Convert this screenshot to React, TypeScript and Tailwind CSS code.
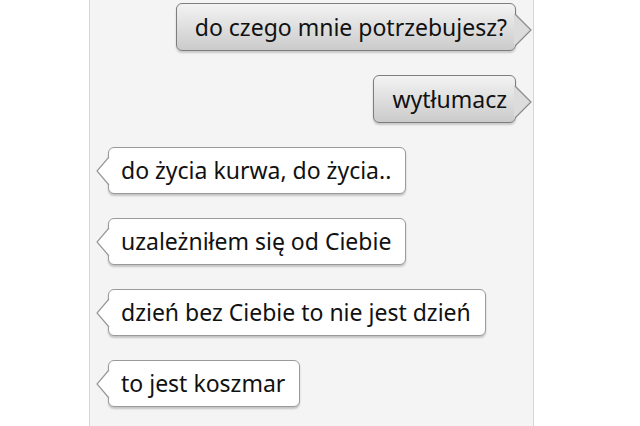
const messages = [
  { text: "do czego mnie potrzebujesz?", mine: true },
  { text: "wytłumacz", mine: true },
  { text: "do życia kurwa, do życia..", mine: false },
  { text: "uzależniłem się od Ciebie", mine: false },
  { text: "dzień bez Ciebie to nie jest dzień", mine: false },
  { text: "to jest koszmar", mine: false },
];

function Bubble({ text, mine }: { text: string; mine: boolean }) {
  if (mine) {
    return (
      <div className="relative self-end mr-[17px]">
        <div className="h-[48px] flex items-center pl-[18px] pr-[8px] rounded-[6px] border border-[#7d7d7d] bg-gradient-to-b from-[#f3f3f3] to-[#cbcbcb] shadow-[0_2px_2px_rgba(0,0,0,0.18)] text-[#111] text-[23px]">
          {text}
        </div>
        <svg
          className="absolute right-[-17px] top-[10px]"
          width="19"
          height="34"
          viewBox="0 0 19 34"
        >
          <polygon points="0,0 17,17 0,34" fill="#dcdcdc" />
          <polyline
            points="1,1 17,17 1,33"
            fill="none"
            stroke="#8a8a8a"
            strokeWidth="1.2"
          />
        </svg>
      </div>
    );
  }
  return (
    <div className="relative self-start ml-[18px]">
      <div className="h-[47px] flex items-center pl-[12px] pr-[14px] rounded-[6px] border border-[#9a9a9a] bg-white shadow-[0_2px_2px_rgba(0,0,0,0.2)] text-[#111] text-[23px]">
        {text}
      </div>
      <svg
        className="absolute left-[-12px] top-[9px]"
        width="14"
        height="30"
        viewBox="0 0 14 30"
      >
        <polygon points="14,0 1,15 14,30" fill="#ffffff" />
        <polyline
          points="13,1 1,15 13,29"
          fill="none"
          stroke="#999"
          strokeWidth="1.2"
        />
      </svg>
    </div>
  );
}

export default function App() {
  return (
    <div className="w-[640px] h-[426px] bg-white overflow-hidden font-['Noto_Sans',sans-serif]">
      <div className="ml-[89px] w-[445px] h-full bg-[#f4f4f4] border-l border-r border-[#d6d6d6] flex flex-col gap-[24px] pt-[3px]">
        {messages.map((m, i) => (
          <Bubble key={i} text={m.text} mine={m.mine} />
        ))}
      </div>
    </div>
  );
}
